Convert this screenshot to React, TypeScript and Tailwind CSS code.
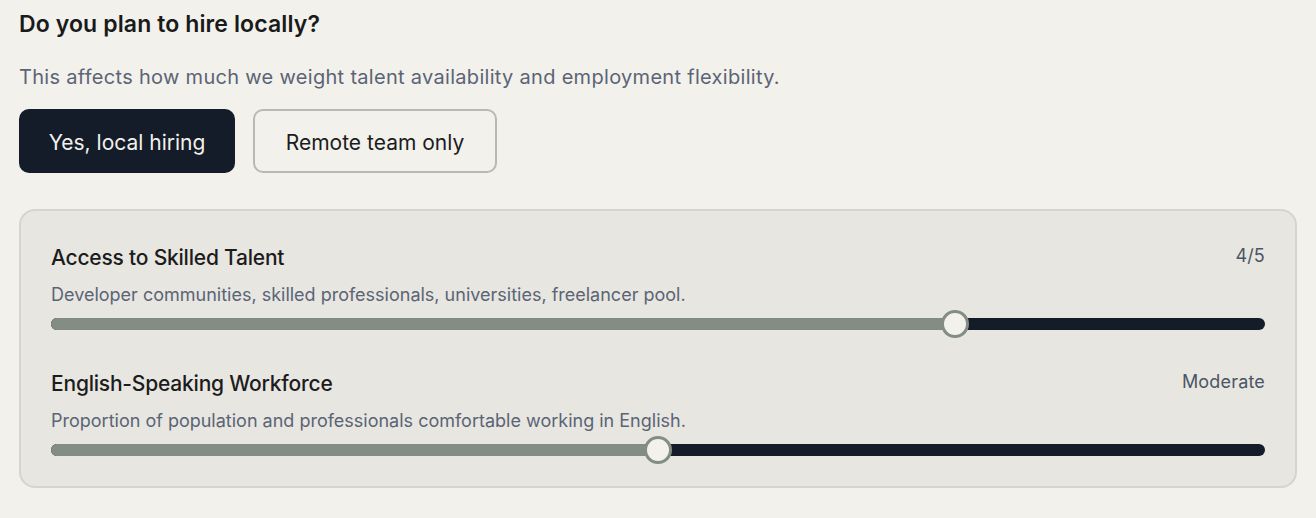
const font = { fontFamily: "Inter, 'Noto Sans', sans-serif" };

type Factor = {
  title: string;
  description: string;
  label: string;
  value: number; // 1..5
};

const factors: Factor[] = [
  {
    title: "Access to Skilled Talent",
    description: "Developer communities, skilled professionals, universities, freelancer pool.",
    label: "4/5",
    value: 4,
  },
  {
    title: "English-Speaking Workforce",
    description: "Proportion of population and professionals comfortable working in English.",
    label: "Moderate",
    value: 3,
  },
];

function Slider({ value }: { value: number }) {
  const pct = (value - 1) / 4;
  return (
    <div className="relative h-[28px] flex items-center">
      <div className="h-[12px] w-full rounded-full bg-[#131c28]" />
      <div
        className="absolute left-0 h-[12px] rounded-l-full bg-[#838d83]"
        style={{ width: `calc(14px + ${pct} * (100% - 28px))` }}
      />
      <div
        className="absolute top-0 h-[28px] w-[28px] rounded-full border-[3px] border-[#838d83] bg-[#f2f1ec]"
        style={{ left: `calc(${pct} * (100% - 28px))` }}
      />
    </div>
  );
}

export default function App() {
  return (
    <div className="min-h-screen bg-[#f2f1ec] px-[19px] pt-[9px] text-[#1c1c1c]" style={font}>
      <h2 className="text-[23px] leading-[30px] font-semibold tracking-[0.005em] text-[#1a1a1a]">
        Do you plan to hire locally?
      </h2>
      <p className="mt-[24px] text-[20px] leading-[28px] text-[#5b6475] tracking-[0.015em]">
        This affects how much we weight talent availability and employment flexibility.
      </p>
      <div className="mt-[18px] flex gap-[18px]">
        <button className="h-[64px] w-[216px] rounded-[10px] bg-[#131c28] pt-[3px] text-[21px] text-[#f2f1ec]">
          Yes, local hiring
        </button>
        <button className="h-[64px] w-[244px] rounded-[10px] border-2 border-[#b8b8b6] pt-[3px] text-[21px] text-[#1c1c1c]">
          Remote team only
        </button>
      </div>

      <div className="mt-[36px] rounded-[16px] border-2 border-[#d5d4cf] bg-[#e7e6e1] px-[30px] pt-[33px] pb-[22px]">
        {factors.map((f, i) => (
          <div key={f.title} className={i > 0 ? "mt-[32px]" : ""}>
            <div className="flex items-start justify-between">
              <h3 className="text-[21px] leading-[28px] font-medium tracking-[-0.01em] text-[#1c1c1c]">
                {f.title}
              </h3>
              <span className="text-[18px] leading-[24px] tracking-[0.01em] text-[#4b5563]">{f.label}</span>
            </div>
            <p className="mt-[11px] text-[18px] leading-[24px] text-[#5b6475]">
              {f.description}
            </p>
            <div className="mt-[3px]">
              <Slider value={f.value} />
            </div>
          </div>
        ))}
      </div>
    </div>
  );
}
